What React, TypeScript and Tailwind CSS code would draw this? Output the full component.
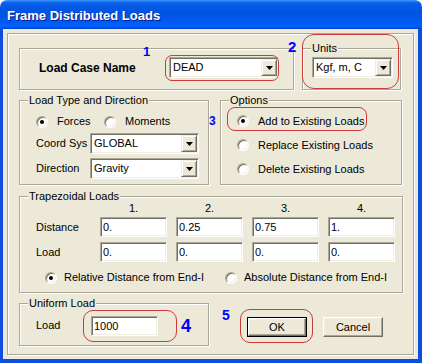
import type { ReactNode } from "react";

const sunken =
  "border border-t-[#aca899] border-l-[#aca899] border-b-white border-r-white bg-white shadow-[inset_1px_1px_0_#716f64,inset_-1px_-1px_0_#f1efe2]";

const raised =
  "border border-t-[#f1efe2] border-l-[#f1efe2] border-b-[#716f64] border-r-[#716f64] bg-[#ece9d8] shadow-[inset_1px_1px_0_#fff,inset_-1px_-1px_0_#aca899]";

function Group({
  label,
  className = "",
  children,
}: {
  label?: string;
  className?: string;
  children?: ReactNode;
}) {
  return (
    <div
      className={`relative border border-[#aca899] shadow-[1px_1px_0_#fff,inset_1px_1px_0_#fff] ${className}`}
    >
      {label ? (
        <span className="absolute -top-[7px] left-[8px] bg-[#ece9d8] px-[1px] leading-[13px]">
          {label}
        </span>
      ) : null}
      {children}
    </div>
  );
}

function Combo({ value, className = "" }: { value: string; className?: string }) {
  return (
    <div className={`flex h-[21px] items-stretch ${sunken} ${className}`}>
      <span className="flex-1 pl-[3px] leading-[19px]">{value}</span>
      <span className={`my-[1px] mr-[1px] flex w-[16px] items-center justify-center ${raised}`}>
        <svg width="7" height="4" viewBox="0 0 7 4">
          <path d="M0 0h7L3.5 4z" fill="#000" />
        </svg>
      </span>
    </div>
  );
}

function Field({ value, className = "" }: { value: string; className?: string }) {
  return (
    <div className={`h-[20px] w-[67px] pl-[2px] leading-[18px] ${sunken} ${className}`}>
      {value}
    </div>
  );
}

function Radio({ checked = false }: { checked?: boolean }) {
  return (
    <span className="flex h-[12px] w-[12px] shrink-0 items-center justify-center rounded-full border border-t-[#aca899] border-l-[#aca899] border-b-white border-r-white bg-white shadow-[inset_1px_1px_0_#716f64,inset_-1px_-1px_0_#f1efe2]">
      {checked ? <span className="h-[4px] w-[4px] rounded-full bg-black" /> : null}
    </span>
  );
}

function Option({ label, checked }: { label: string; checked?: boolean }) {
  return (
    <div className="flex h-[24px] items-center gap-[9px]">
      <Radio checked={checked} />
      <span>{label}</span>
    </div>
  );
}

const columns = ["1.", "2.", "3.", "4."];
const distances = ["0.", "0.25", "0.75", "1."];
const loads = ["0.", "0.", "0.", "0."];

export default function App() {
  return (
    <div className="relative h-[363px] w-[422px] select-none bg-white font-['Liberation_Sans',Arial,sans-serif] text-[11px] text-black">
      <div className="flex h-full flex-col">
        <div className="flex h-[29px] items-center rounded-t-[7px] bg-[linear-gradient(180deg,#3d95ff_0px,#0a5fe8_3px,#0053e1_12px,#0059ef_22px,#0063ff_26px,#0043cf_29px)] pl-[7px] pt-[2px]">
          <span className="text-[13px] font-bold leading-[15px] text-white [text-shadow:1px_1px_0_#0a1e8c]">
            Frame Distributed Loads
          </span>
        </div>

        <div className="flex flex-1 flex-col border-b-[4px] border-l-[3px] border-r-[4px] border-[#0b4ee0] bg-[#ece9d8] p-[4px]">
          <div className="flex flex-1 flex-col border border-[#aca899] pl-[11px] pt-[14px] shadow-[1px_1px_0_#fff,inset_1px_1px_0_#fff]">
            {/* load case + units */}
            <div className="flex gap-[8px]">
              <Group className="flex h-[42px] w-[275px] items-center pb-[3px] pl-[19px] pr-[14px]">
                <span className="text-[12px] font-bold">Load Case Name</span>
                <Combo value="DEAD" className="ml-auto w-[110px]" />
              </Group>
              <Group label="Units" className="h-[42px] w-[99px] pl-[9px] pt-[8px]">
                <Combo value="Kgf, m, C" className="w-[81px]" />
              </Group>
            </div>

            {/* load type + options */}
            <div className="mt-[10px] flex gap-[11px]">
              <Group label="Load Type and Direction" className="h-[85px] w-[190px] pl-[16px] pt-[14px]">
                <div className="flex h-[13px] items-center">
                  <div className="flex w-[68px] items-center gap-[9px]">
                    <Radio checked />
                    <span>Forces</span>
                  </div>
                  <div className="flex items-center gap-[9px]">
                    <Radio />
                    <span>Moments</span>
                  </div>
                </div>
                <div className="mt-[5px] flex items-center">
                  <span className="w-[54px]">Coord Sys</span>
                  <Combo value="GLOBAL" className="w-[109px]" />
                </div>
                <div className="mt-[4px] flex items-center">
                  <span className="w-[54px]">Direction</span>
                  <Combo value="Gravity" className="w-[109px]" />
                </div>
              </Group>
              <Group label="Options" className="h-[85px] w-[182px] pl-[16px] pt-[8px]">
                <Option label="Add to Existing Loads" checked />
                <Option label="Replace Existing Loads" />
                <Option label="Delete Existing Loads" />
              </Group>
            </div>

            {/* trapezoidal */}
            <Group label="Trapezoidal Loads" className="mt-[11px] h-[97px] w-[384px] pl-[16px] pt-[5px]">
              <div className="grid grid-cols-[55px_67px_67px_67px_67px] gap-x-[9px]">
                <span />
                {columns.map((c) => (
                  <span key={c} className="h-[13px] text-center leading-[13px]">
                    {c}
                  </span>
                ))}
                <span className="mt-[2px] leading-[20px]">Distance</span>
                {distances.map((d, i) => (
                  <Field key={i} value={d} className="mt-[2px]" />
                ))}
                <span className="mt-[5px] leading-[20px]">Load</span>
                {loads.map((d, i) => (
                  <Field key={i} value={d} className="mt-[5px]" />
                ))}
              </div>
              <div className="mt-[9px] flex h-[13px] items-center pl-[9px]">
                <div className="flex w-[180px] items-center gap-[7px]">
                  <Radio checked />
                  <span>Relative Distance from End-I</span>
                </div>
                <div className="flex items-center gap-[7px]">
                  <Radio />
                  <span>Absolute Distance from End-I</span>
                </div>
              </div>
            </Group>

            {/* uniform + buttons */}
            <div className="mt-[10px] flex">
              <Group label="Uniform Load" className="flex h-[43px] w-[190px] items-center pl-[16px] pt-[2px]">
                <span className="w-[55px]">Load</span>
                <Field value="1000" className="h-[19px] leading-[17px]" />
              </Group>
              <div className="ml-[38px] mt-[14px] flex gap-[16px]">
                <div className="h-[20px] w-[60px] border border-black">
                  <button
                    type="button"
                    className={`h-full w-full border border-t-white border-l-white border-b-[#716f64] border-r-[#716f64] bg-[#ece9d8] text-[11px] leading-none shadow-[inset_-1px_-1px_0_#aca899,inset_1px_1px_0_#f1efe2]`}
                  >
                    OK
                  </button>
                </div>
                <button
                  type="button"
                  className="h-[20px] w-[60px] border border-t-white border-l-white border-b-[#716f64] border-r-[#716f64] bg-[#ece9d8] text-[11px] leading-none shadow-[inset_-1px_-1px_0_#aca899,inset_1px_1px_0_#f1efe2]"
                >
                  Cancel
                </button>
              </div>
            </div>
          </div>
        </div>
      </div>

      {/* annotations drawn over the dialog */}
      <span className="absolute left-[143px] top-[45px] text-[13px] font-bold leading-none text-[#0000ff]">1</span>
      <span className="absolute left-[288px] top-[39px] text-[15px] font-bold leading-none text-[#0000ff]">2</span>
      <span className="absolute left-[209px] top-[115px] text-[12px] font-bold leading-none text-[#0000ff]">3</span>
      <span className="absolute left-[181px] top-[317px] text-[18px] font-bold leading-none text-[#0000ff]">4</span>
      <span className="absolute left-[222px] top-[308px] text-[14px] font-bold leading-none text-[#0000ff]">5</span>

      <div className="pointer-events-none absolute left-[165px] top-[55px] h-[26px] w-[114px] rounded-[7px] border border-[#cd3a3a]" />
      <div className="pointer-events-none absolute left-[302px] top-[34px] h-[55px] w-[97px] rounded-[12px] border border-[#cd3a3a]" />
      <div className="pointer-events-none absolute left-[227px] top-[107px] h-[24px] w-[140px] rounded-[8px] border border-[#cd3a3a]" />
      <div className="pointer-events-none absolute left-[83px] top-[310px] h-[32px] w-[94px] rounded-[10px] border border-[#cd3a3a]" />
      <div className="pointer-events-none absolute left-[240px] top-[309px] h-[34px] w-[73px] rounded-[10px] border border-[#cd3a3a]" />
    </div>
  );
}
